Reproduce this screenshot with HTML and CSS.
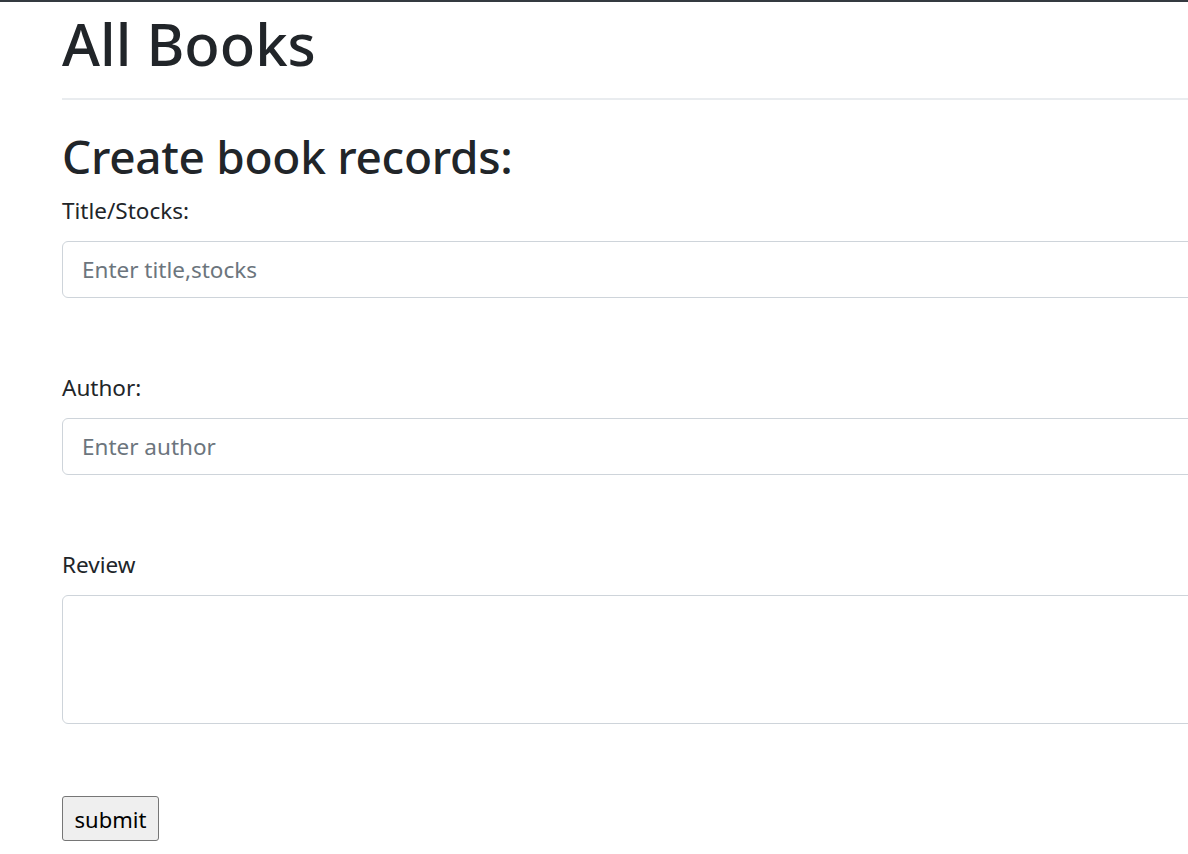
FILE: index.html
```html
<!DOCTYPE html>
<html lang="en">
<head>
<meta charset="utf-8">
<title>All Books</title>
<link rel="stylesheet" href="styles.css">
</head>
<body>
<div class="topbar"></div>
<main class="container">
  <h1 class="title">All Books</h1>
  <hr class="rule">
  <h2 class="subtitle">Create book records:</h2>
  <form class="book-form">
    <div class="group">
      <label class="label" for="title">Title/Stocks:</label>
      <input class="control" id="title" type="text" placeholder="Enter title,stocks">
    </div>
    <div class="group">
      <label class="label" for="author">Author:</label>
      <input class="control" id="author" type="text" placeholder="Enter author">
    </div>
    <div class="group">
      <label class="label" for="review">Review</label>
      <textarea class="control area" id="review"></textarea>
    </div>
    <div class="actions">
      <button class="submit" type="button">submit</button>
    </div>
  </form>
</main>
</body>
</html>
```

FILE: styles.css
```css
html, body {
  margin: 0;
  padding: 0;
  overflow: hidden;
  background: #fff;
}
body {
  font-family: "Noto Sans", "Open Sans", sans-serif;
  color: #212529;
  width: 1188px;
  height: 854px;
}
.topbar {
  height: 2px;
  background: #343a40;
}
.container {
  padding-left: 62px;
  width: 1400px;
}
.title {
  font-size: 58px;
  font-weight: 500;
  letter-spacing: 0;
  line-height: 72px;
  margin: 6px 0 0 0;
}
.rule {
  border: 0;
  border-top: 2px solid #e9ecef;
  margin: 18px 0 0 0;
}
.subtitle {
  font-size: 46px;
  font-weight: 500;
  letter-spacing: -0.3px;
  line-height: 58px;
  margin: 27px 0 0 0;
}
.book-form {
  display: flex;
  flex-direction: column;
}
.group {
  display: flex;
  flex-direction: column;
  margin-top: 8px;
}
.group + .group {
  margin-top: 72px;
}
.label {
  font-size: 22.5px;
  line-height: 36px;
  margin-bottom: 12px;
}
.control {
  box-sizing: border-box;
  height: 57px;
  width: 1400px;
  border: 1px solid #ced4da;
  border-radius: 6px;
  padding: 0 19px;
  font-family: inherit;
  font-size: 22.5px;
  color: #495057;
  background: #fff;
}
.control::placeholder {
  color: #6c757d;
}
.area {
  height: 129px;
  resize: none;
}
.actions {
  margin-top: 72px;
}
.submit {
  font-family: inherit;
  font-size: 22px;
  height: 45px;
  width: 97px;
  padding: 0;
  color: #000;
  background: #efefef;
  border: 1px solid #767676;
  border-radius: 3px;
}
```
